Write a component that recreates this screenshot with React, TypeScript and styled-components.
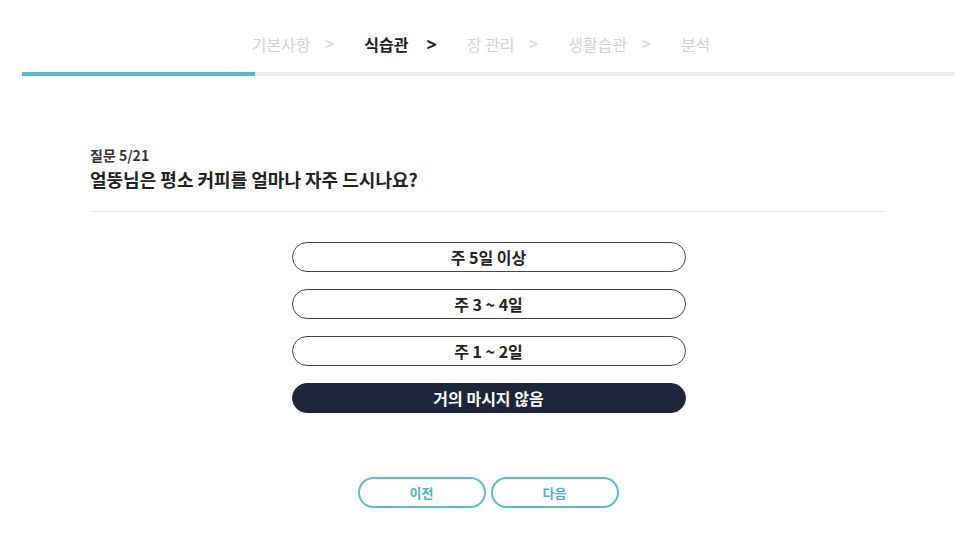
import styled, { createGlobalStyle } from "styled-components";

const GlobalStyle = createGlobalStyle`
  * { box-sizing: border-box; }
  body {
    margin: 0;
    background: #ffffff;
    font-family: "Noto Sans CJK KR", "Noto Sans", sans-serif;
    color: #222;
  }
`;

const steps = ["기본사항", "식습관", "장 관리", "생활습관", "분석"];
const current = 1;

const options = ["주 5일 이상", "주 3 ~ 4일", "주 1 ~ 2일", "거의 마시지 않음"];
const selected = 3;

const App = () => {
  return (
    <Page>
      <GlobalStyle />
      <StepNav>
        {steps.map((step, i) => (
          <Step key={step} $active={i === current}>
            <span>{step}</span>
            {i < steps.length - 1 && <Chevron $active={i === current}>&gt;</Chevron>}
          </Step>
        ))}
      </StepNav>
      <ProgressTrack>
        <ProgressFill style={{ width: "25%" }} />
      </ProgressTrack>

      <Content>
        <QuestionNo>질문 5/21</QuestionNo>
        <QuestionTitle>얼뚱님은 평소 커피를 얼마나 자주 드시나요?</QuestionTitle>
        <Divider />

        <OptionList>
          {options.map((opt, i) => (
            <OptionButton key={opt} $selected={i === selected}>
              {opt}
            </OptionButton>
          ))}
        </OptionList>

        <NavButtons>
          <PagerButton>이전</PagerButton>
          <PagerButton>다음</PagerButton>
        </NavButtons>
      </Content>
    </Page>
  );
};

const Page = styled.div`
  width: 966px;
  height: 548px;
  padding-top: 33px;
`;

const StepNav = styled.nav`
  display: flex;
  justify-content: center;
  align-items: center;
  gap: 30px;
  height: 22px;
  padding-right: 4px;
`;

const Step = styled.div<{ $active: boolean }>`
  display: flex;
  align-items: center;
  gap: 14px;
  font-size: 16px;
  line-height: 22px;
  font-weight: ${(p) => (p.$active ? 700 : 400)};
  color: ${(p) => (p.$active ? "#222" : "#d3d3d3")};
`;

const Chevron = styled.span<{ $active: boolean }>`
  font-family: "Noto Sans", sans-serif;
  font-size: ${(p) => (p.$active ? "18px" : "17px")};
  font-weight: ${(p) => (p.$active ? 700 : 400)};
  margin-left: ${(p) => (p.$active ? "4px" : "0")};
`;

const ProgressTrack = styled.div`
  margin: 17px 11px 0 22px;
  height: 4px;
  background: #ececec;
  display: flex;
  align-items: center;
`;

const ProgressFill = styled.div`
  height: 4px;
  background: #58b9c8;
`;

const Content = styled.main`
  margin: 70px 0 0 90px;
  width: 796px;
`;

const QuestionNo = styled.div`
  font-size: 14px;
  font-weight: 700;
  line-height: 18px;
  color: #333;
`;

const QuestionTitle = styled.h1`
  margin: 3px 0 0;
  font-size: 18px;
  font-weight: 700;
  line-height: 24px;
  color: #222;
`;

const Divider = styled.hr`
  margin: 20px 0 0;
  border: 0;
  border-top: 1px solid #e6e6e6;
`;

const OptionList = styled.div`
  display: flex;
  flex-direction: column;
  align-items: center;
  gap: 17px;
  margin-top: 30px;
  padding-left: 1px;
`;

const OptionButton = styled.button<{ $selected: boolean }>`
  width: 394px;
  height: 30px;
  border-radius: 15px;
  border: 1px solid ${(p) => (p.$selected ? "#1f2639" : "#444")};
  background: ${(p) => (p.$selected ? "#1f2639" : "#fff")};
  color: ${(p) => (p.$selected ? "#fff" : "#222")};
  font-family: "Noto Sans CJK KR", sans-serif;
  font-size: 16px;
  font-weight: 700;
  cursor: pointer;
  padding: 0;
`;

const NavButtons = styled.div`
  display: flex;
  justify-content: center;
  gap: 5px;
  margin-top: 64px;
  padding-left: 0;
`;

const PagerButton = styled.button`
  width: 128px;
  height: 31px;
  border-radius: 16px;
  border: 2px solid #5bbccb;
  background: #fff;
  color: #4fb3c3;
  font-family: "Noto Sans CJK KR", sans-serif;
  font-size: 13px;
  font-weight: 700;
  cursor: pointer;
  padding: 0;
`;

export default App;
